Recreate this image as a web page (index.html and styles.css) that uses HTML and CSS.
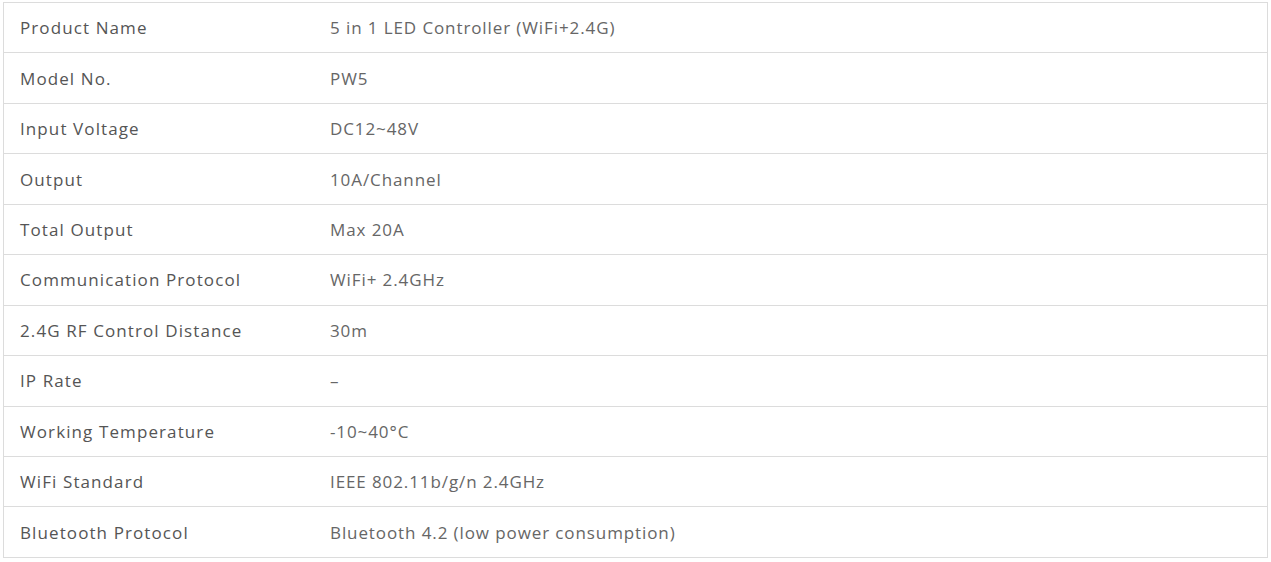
FILE: index.html
```html
<!DOCTYPE html>
<html>
<head>
<meta charset="utf-8">
<link rel="stylesheet" href="styles.css">
</head>
<body>
<div class="specs">
  <div class="row"><div class="label">Product Name</div><div class="value">5 in 1 LED Controller (WiFi+2.4G)</div></div>
  <div class="row"><div class="label">Model No.</div><div class="value">PW5</div></div>
  <div class="row"><div class="label">Input Voltage</div><div class="value">DC12~48V</div></div>
  <div class="row"><div class="label">Output</div><div class="value">10A/Channel</div></div>
  <div class="row"><div class="label">Total Output</div><div class="value">Max 20A</div></div>
  <div class="row"><div class="label">Communication Protocol</div><div class="value">WiFi+ 2.4GHz</div></div>
  <div class="row"><div class="label">2.4G RF Control Distance</div><div class="value">30m</div></div>
  <div class="row"><div class="label">IP Rate</div><div class="value">–</div></div>
  <div class="row"><div class="label">Working Temperature</div><div class="value">-10~40°C</div></div>
  <div class="row"><div class="label">WiFi Standard</div><div class="value">IEEE 802.11b/g/n 2.4GHz</div></div>
  <div class="row"><div class="label">Bluetooth Protocol</div><div class="value">Bluetooth 4.2 (low power consumption)</div></div>
</div>
</body>
</html>
```
FILE: styles.css
```css
html, body {
  margin: 0;
  padding: 0;
  background: #fff;
}
body {
  padding: 2px 0 0 3px;
  font-family: "Open Sans", "Liberation Sans", sans-serif;
  font-size: 17px;
}
.specs {
  width: 1265px;
  box-sizing: border-box;
  border: 1px solid #dcdcdc;
  border-bottom: none;
}
.row {
  display: flex;
  align-items: center;
  height: 50.45px;
  box-sizing: border-box;
  border-bottom: 1px solid #dcdcdc;
}
.label {
  width: 310px;
  padding-left: 16px;
  box-sizing: border-box;
  color: #555;
  font-weight: 500;
  letter-spacing: 1.1px;
}
.value {
  padding-left: 16px;
  color: #666;
  letter-spacing: 0.9px;
}
```
